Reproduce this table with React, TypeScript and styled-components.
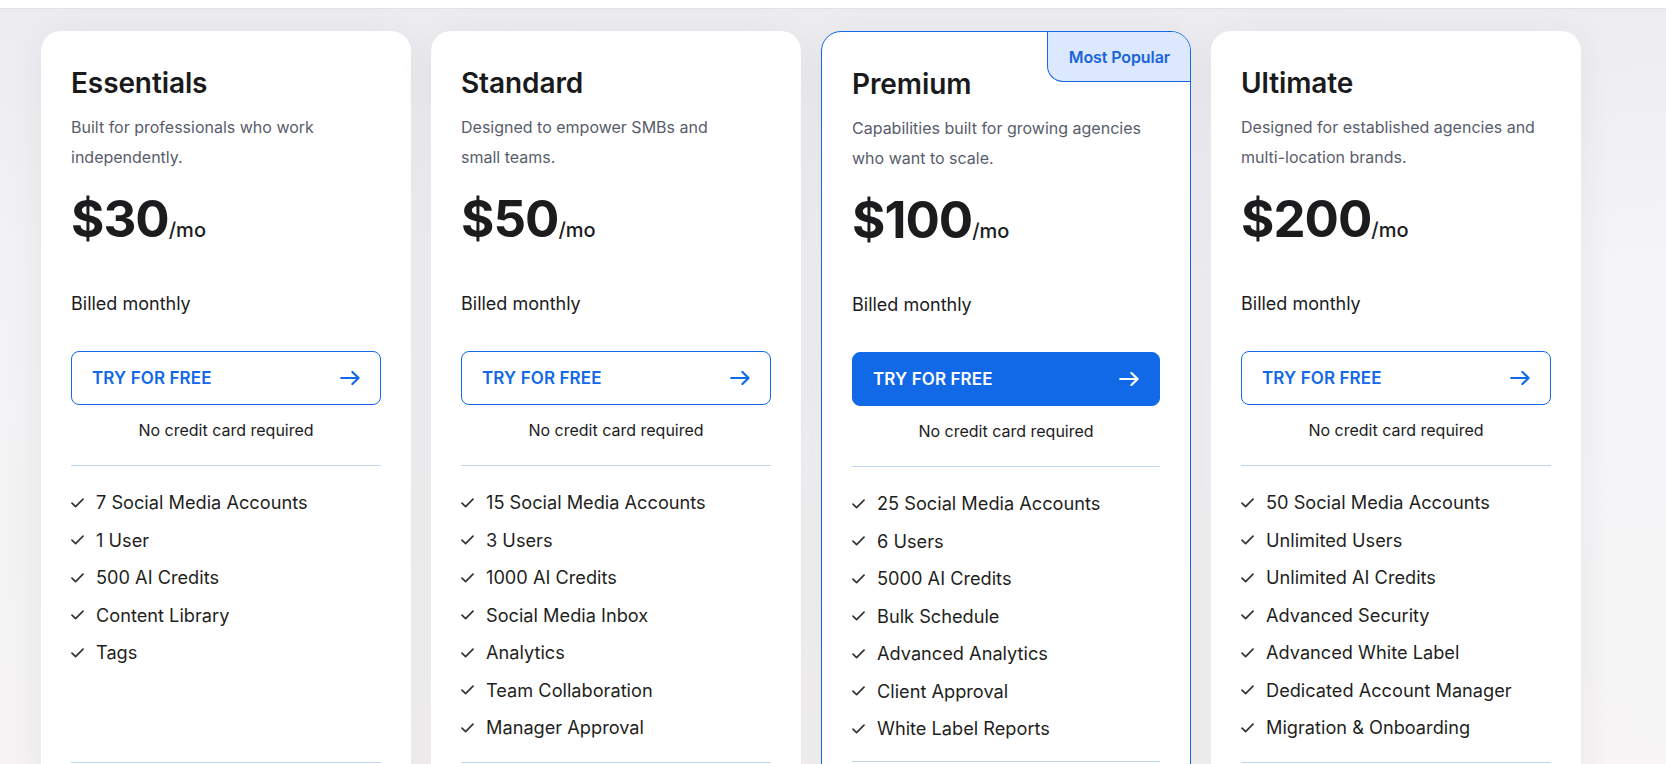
import React from "react";
import styled, { createGlobalStyle, css } from "styled-components";

const GlobalStyle = createGlobalStyle`
  html, body {
    margin: 0;
    padding: 0;
    height: 100%;
    overflow: hidden;
  }
  body {
    font-family: Inter, "Liberation Sans", Arial, sans-serif;
    background: #ffffff;
    -webkit-font-smoothing: antialiased;
  }
  * { box-sizing: border-box; }
`;

const BLUE = "#1269e8";

const Page = styled.div`
  min-height: 100vh;
  display: flex;
  flex-direction: column;
`;

const TopBar = styled.div`
  height: 9px;
  background: #ffffff;
  border-bottom: 1px solid #e2e2e6;
`;

const Stage = styled.main`
  flex: 1;
  background:
    linear-gradient(180deg, rgba(236, 236, 240, 0.9) 0%, rgba(243, 243, 246, 0.6) 30%, rgba(247, 244, 243, 0.7) 100%),
    linear-gradient(90deg, #f2f1f3 0%, #f4f4f7 70%, #f7f7fa 100%);
  padding: 22px 0 40px 41px;
`;

const CardsRow = styled.div`
  display: flex;
  gap: 20px;
  align-items: stretch;
`;

const Card = styled.section<{ $featured?: boolean }>`
  position: relative;
  width: 370px;
  background: #ffffff;
  border-radius: 20px;
  padding: 34px 30px 40px;
  display: flex;
  flex-direction: column;
  box-shadow: 0 6px 36px rgba(40, 40, 60, 0.07);
  ${(p) =>
    p.$featured &&
    css`
      border: 1px solid ${BLUE};
    `}
`;

const Badge = styled.div`
  position: absolute;
  top: 0;
  right: 0;
  height: 50px;
  padding: 0 20px 0 21px;
  display: flex;
  align-items: center;
  background: #dbe8fd;
  border-left: 1px solid ${BLUE};
  border-bottom: 1px solid ${BLUE};
  border-radius: 0 19px 0 16px;
  color: #1a64dc;
  font-size: 16px;
  font-weight: 600;
  letter-spacing: -0.1px;
`;

const Title = styled.h2`
  margin: 0;
  font-size: 28px;
  line-height: 36px;
  font-weight: 600;
  color: #1a1a1c;
  letter-spacing: -0.1px;
`;

const Description = styled.p`
  margin: 11px 0 0;
  font-size: 16px;
  line-height: 30px;
  color: #585d6c;
  white-space: pre-line;
  height: 60px;
`;

const PriceRow = styled.div`
  margin-top: 17px;
  display: flex;
  align-items: baseline;
  height: 60px;
`;

const Amount = styled.span`
  font-size: 51px;
  line-height: 60px;
  font-weight: 700;
  color: #1c1c1e;
  letter-spacing: -1px;
`;

const Period = styled.span`
  font-size: 20px;
  font-weight: 500;
  color: #1c1c1e;
`;

const Billing = styled.div`
  margin-top: 41px;
  font-size: 18px;
  line-height: 27px;
  color: #1c1c1e;
`;

const CTA = styled.a<{ $primary?: boolean }>`
  margin-top: 34px;
  height: 54px;
  border-radius: 8px;
  border: 1px solid ${BLUE};
  padding: 0 20px 0 20px;
  display: flex;
  align-items: center;
  justify-content: space-between;
  font-size: 17px;
  font-weight: 600;
  letter-spacing: 0.1px;
  text-decoration: none;
  cursor: pointer;
  color: ${(p) => (p.$primary ? "#ffffff" : BLUE)};
  background: ${(p) => (p.$primary ? BLUE : "#ffffff")};
`;

const Note = styled.div`
  margin-top: 13px;
  text-align: center;
  font-size: 16px;
  line-height: 24px;
  color: #1c1c1e;
`;

const Divider = styled.hr`
  margin: 0;
  border: 0;
  height: 1px;
  background: #bfd6f7;
`;

const TopDivider = styled(Divider)`
  margin-top: 23px;
`;

const FeatureList = styled.ul`
  list-style: none;
  margin: 0;
  padding: 23px 0 19px;
  flex: 1;
  display: flex;
  flex-direction: column;
  gap: 10.5px;
`;

const Feature = styled.li`
  display: flex;
  align-items: center;
  gap: 12px;
  font-size: 18.2px;
  line-height: 27px;
  color: #1f1f22;
`;

const CheckIcon = () => (
  <svg width="13" height="10" viewBox="0 0 13 10" fill="none" aria-hidden="true">
    <path d="M1 5.2 L4.6 8.6 L12 1.2" stroke="#333338" strokeWidth="1.7" strokeLinecap="round" strokeLinejoin="round" />
  </svg>
);

const ArrowIcon = () => (
  <svg width="20" height="14" viewBox="0 0 20 14" fill="none" aria-hidden="true">
    <path d="M1.2 7 H18.6 M12.4 1 L18.6 7 L12.4 13" stroke="currentColor" strokeWidth="2.2" strokeLinecap="round" strokeLinejoin="round" />
  </svg>
);

type Plan = {
  name: string;
  desc: string;
  price: string;
  featured?: boolean;
  features: string[];
};

const plans: Plan[] = [
  {
    name: "Essentials",
    desc: "Built for professionals who work\nindependently.",
    price: "$30",
    features: ["7 Social Media Accounts", "1 User", "500 AI Credits", "Content Library", "Tags"],
  },
  {
    name: "Standard",
    desc: "Designed to empower SMBs and\nsmall teams.",
    price: "$50",
    features: [
      "15 Social Media Accounts",
      "3 Users",
      "1000 AI Credits",
      "Social Media Inbox",
      "Analytics",
      "Team Collaboration",
      "Manager Approval",
    ],
  },
  {
    name: "Premium",
    desc: "Capabilities built for growing agencies\nwho want to scale.",
    price: "$100",
    featured: true,
    features: [
      "25 Social Media Accounts",
      "6 Users",
      "5000 AI Credits",
      "Bulk Schedule",
      "Advanced Analytics",
      "Client Approval",
      "White Label Reports",
    ],
  },
  {
    name: "Ultimate",
    desc: "Designed for established agencies and\nmulti-location brands.",
    price: "$200",
    features: [
      "50 Social Media Accounts",
      "Unlimited Users",
      "Unlimited AI Credits",
      "Advanced Security",
      "Advanced White Label",
      "Dedicated Account Manager",
      "Migration & Onboarding",
    ],
  },
];

export default function App() {
  return (
    <Page>
      <GlobalStyle />
      <TopBar />
      <Stage>
        <CardsRow>
          {plans.map((plan) => (
            <Card key={plan.name} $featured={plan.featured}>
              {plan.featured && <Badge>Most Popular</Badge>}
              <Title>{plan.name}</Title>
              <Description>{plan.desc}</Description>
              <PriceRow>
                <Amount>{plan.price}</Amount>
                <Period>/mo</Period>
              </PriceRow>
              <Billing>Billed monthly</Billing>
              <CTA $primary={plan.featured}>
                <span>TRY FOR FREE</span>
                <ArrowIcon />
              </CTA>
              <Note>No credit card required</Note>
              <TopDivider />
              <FeatureList>
                {plan.features.map((f) => (
                  <Feature key={f}>
                    <CheckIcon />
                    <span>{f}</span>
                  </Feature>
                ))}
              </FeatureList>
              <Divider />
            </Card>
          ))}
        </CardsRow>
      </Stage>
    </Page>
  );
}
